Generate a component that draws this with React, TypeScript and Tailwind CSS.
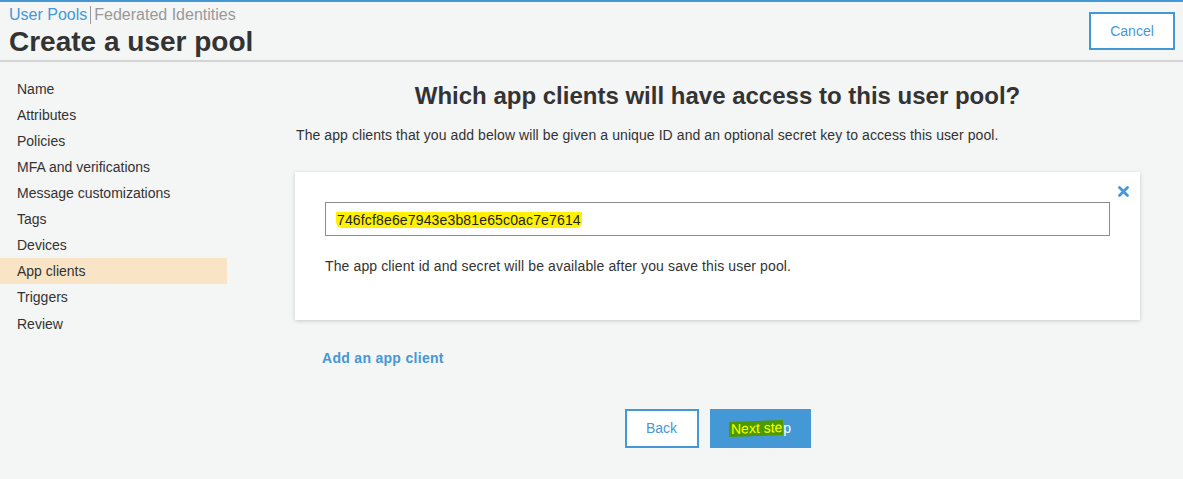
import React from "react";

const navItems = [
  "Name",
  "Attributes",
  "Policies",
  "MFA and verifications",
  "Message customizations",
  "Tags",
  "Devices",
  "App clients",
  "Triggers",
  "Review",
];

export default function App() {
  return (
    <div
      className="w-[1183px] h-[479px] overflow-hidden bg-[#f4f5f5] text-[#333] border-t-2 border-[#4598d6]"
      style={{ fontFamily: '"Liberation Sans", Arial, sans-serif' }}
    >
      {/* Header */}
      <div className="h-[60px] border-b-2 border-[#d5d5d5] flex justify-between items-start">
        <div className="pl-[9px]">
          <div className="text-[16px] leading-[24px] mt-[1px] flex items-center">
            <span className="text-[#4598d6]">User Pools</span>
            <span className="mx-[3px] inline-block w-px h-[18px] bg-[#999]" />
            <span className="text-[#999]">Federated Identities</span>
          </div>
          <h1 className="text-[28px] leading-[30px] font-bold text-[#333]">Create a user pool</h1>
        </div>
        <button className="mt-[10px] mr-[8px] w-[86px] h-[38px] border-2 border-[#4598d6] bg-white text-[#4598d6] text-[14px]">
          Cancel
        </button>
      </div>

      <div className="flex">
        {/* Sidebar */}
        <nav className="w-[227px] pt-[14px] shrink-0">
          {navItems.map((item) => (
            <div
              key={item}
              className={`h-[26px] pl-[17px] flex items-center text-[14px] text-[#333] ${
                item === "App clients" ? "bg-[#f9e5c5]" : ""
              } ${item === "Review" ? "mt-px" : ""}`}
            >
              {item}
            </div>
          ))}
        </nav>

        {/* Main */}
        <main className="ml-[68px] w-[845px]">
          <h2 className="text-center text-[24px] leading-[26px] font-bold text-[#333] mt-[21px]">
            Which app clients will have access to this user pool?
          </h2>
          <p className="text-[14px] leading-[18px] mt-[17px] ml-px text-[#333] tracking-[0.08px]">
            The app clients that you add below will be given a unique ID and an optional secret key to access this user pool.
          </p>

          <div className="relative mt-[28px] bg-white shadow-[0_1px_4px_rgba(0,0,0,0.18)] h-[148px] px-[30px] pt-[30px]">
            <svg
              className="absolute right-[11px] top-[14px]"
              width="11"
              height="11"
              viewBox="0 0 11 11"
            >
              <path d="M1.5 1.5 L9.5 9.5 M9.5 1.5 L1.5 9.5" stroke="#4598d6" strokeWidth="2.8" strokeLinecap="round" />
            </svg>
            <div className="h-[34px] border border-[#8c8c8c] flex items-center pl-[10px] text-[14px] text-[#222]">
              <span className="bg-[#fff200] px-[1px] rounded-b-[6px] leading-[16px] mt-[2px] tracking-[0.15px]">
                746fcf8e6e7943e3b81e65c0ac7e7614
              </span>
            </div>
            <p className="mt-[21px] text-[14px] leading-[18px] text-[#333] tracking-[0.12px]">
              The app client id and secret will be available after you save this user pool.
            </p>
          </div>

          <div className="mt-[29px] ml-[27px] text-[14px] font-bold text-[#4598d6] leading-[18px] tracking-[0.3px]">
            Add an app client
          </div>

          <div className="flex justify-center gap-[11px] mt-[42px]">
            <button className="w-[74px] h-[39px] border-2 border-[#4598d6] bg-white text-[#4598d6] text-[14px]">
              Back
            </button>
            <button className="w-[101px] h-[39px] bg-[#4598d6] text-white text-[14px] flex items-center justify-center">
              <span className="bg-[#4b9a00] text-[#ffff00] pl-[2px] pr-[1px] leading-[15px] -skew-y-2">Next ste</span>
              <span>p</span>
            </button>
          </div>
        </main>
      </div>
    </div>
  );
}
